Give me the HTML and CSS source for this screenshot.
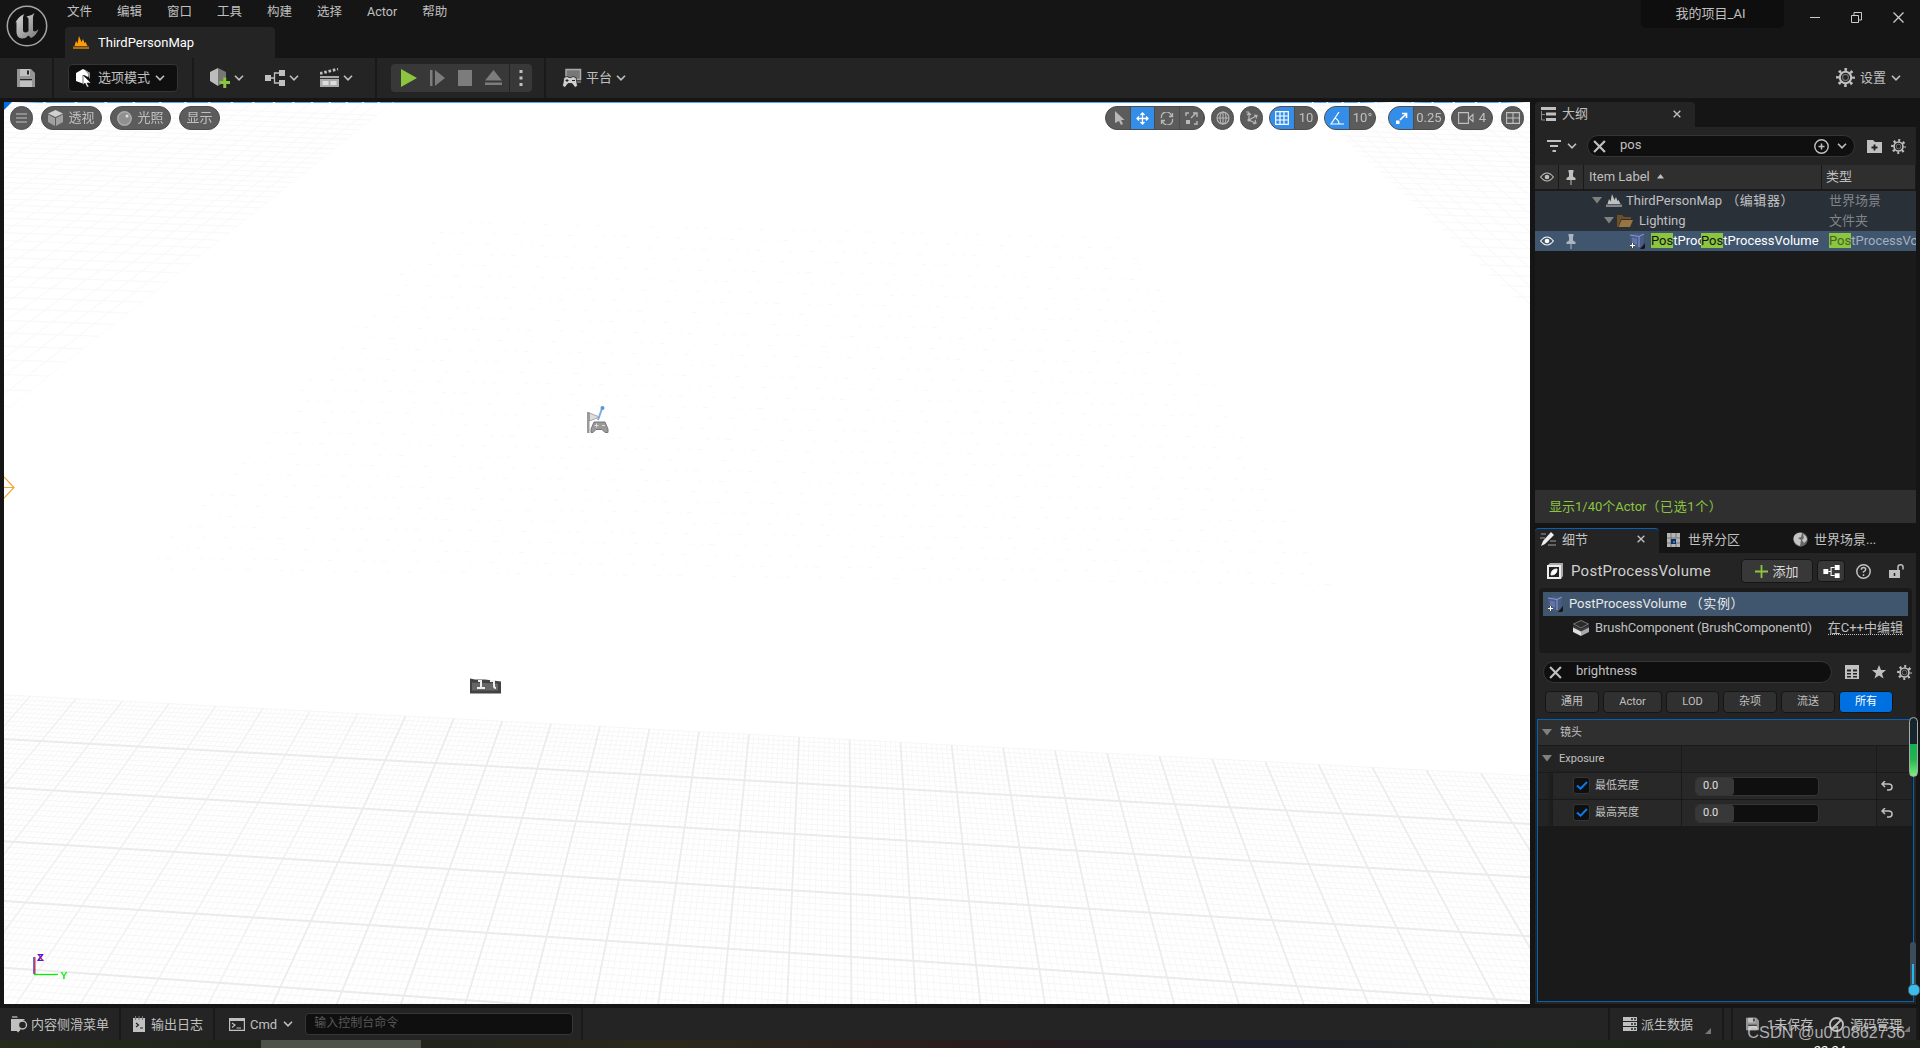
FILE: index.html
```html
<!DOCTYPE html>
<html lang="zh-CN">
  <head>
    <meta charset="utf-8">
    <meta name="viewport" content="width=device-width, initial-scale=1">
    <title>ThirdPersonMap</title>
    <link rel="stylesheet" href="styles.css">
  </head>
  <body>
    <svg class="defs" width="0" height="0">
      <symbol id="chev" viewBox="0 0 10 6"><path d="M1 .8l4 4 4-4" fill="none" stroke="currentColor" stroke-width="1.6"/></symbol>
      <symbol id="tri" viewBox="0 0 10 7"><path d="M0 0h10L5 6.5z" fill="currentColor"/></symbol>
      <symbol id="cross" viewBox="0 0 12 12"><path d="M1 1l10 10M11 1L1 11" fill="none" stroke="currentColor" stroke-width="2"/></symbol>
      <symbol id="gear" viewBox="0 0 18 18"><circle cx="9" cy="9" r="7.4" fill="none" stroke="currentColor" stroke-width="3" stroke-dasharray="2.4 3.41" stroke-dashoffset="1.2"/><circle cx="9" cy="9" r="5.4" fill="none" stroke="currentColor" stroke-width="2"/><circle cx="9" cy="9" r="2.8" fill="none" stroke="currentColor" stroke-width="1" opacity=".55"/></symbol>
      <symbol id="map" viewBox="0 0 16 13"><path d="M0 10.5h16V13H0z" fill="currentColor" opacity=".6"/><path d="M1.500 10L3 5l1.500 2.500L6 0l2.500 6L10 3l1.500 4 1-1L14.500 10z" fill="currentColor"/></symbol>
      <symbol id="save" viewBox="0 0 18 18"><path d="M0 0h14l4 4v14H0z" fill="currentColor" opacity=".72"/><path d="M3 0h10v7H3zM3 11h12v7H3z" fill="currentColor"/><path d="M10 1.500h2v4h-2z" fill="#242424"/><path d="M3 10h12v1.300H3z" fill="#242424"/></symbol>
      <symbol id="nodes" viewBox="0 0 20 16"><path d="M0 5h6v6H0zM14 0h6v6h-6zM14 10h6v6h-6z" fill="currentColor"/><path d="M6 8h3M14 3H9.500v10H14" fill="none" stroke="currentColor" stroke-width="1.300"/></symbol>
      <symbol id="eye" viewBox="0 0 14 10"><path d="M.6 5Q7-3 13.400 5 7 13 .6 5z" fill="none" stroke="currentColor" stroke-width="1.200"/><circle cx="7" cy="5" r="2.300" fill="currentColor"/></symbol>
      <symbol id="pin" viewBox="0 0 10 15"><path d="M2.500 0h5v2L7 3v3.500L9.500 8v2h-9V8L3 6.500V3L2.500 2z" fill="currentColor"/><path d="M5 10v5" stroke="currentColor"/></symbol>
      <symbol id="volume" viewBox="0 0 16 16"><path d="M11 16l5-6v5l-1 1z" fill="#161616"/><path d="M1 2l5-2 9 1-1 11-4 3-8-2z" fill="#4a5b88"/><path d="M1 2l9 1.500L15 1M10 3.500V14" fill="none" stroke="#8a9ccb"/><path d="M3 4.500l5 1v6l-5-1z" fill="#5f74a8"/><path d="M1 12.500h5M3.500 10v5" stroke="#111" stroke-width="3"/><path d="M1 12.500h5M3.500 10v5" stroke="#fff" stroke-width="1.300"/></symbol>
      <symbol id="grip" viewBox="0 0 6 6"><path d="M6 0v6H0z" fill="#777"/></symbol>
    </svg>

    <div class="app">
      <header class="titlebar">
        <svg class="logo" viewBox="0 0 42 42">
          <defs><linearGradient id="metal" x1="0" y1="0" x2="1" y2="1"><stop offset="0" stop-color="#ddd"/><stop offset="1" stop-color="#777"/></linearGradient></defs>
          <circle cx="21" cy="21" r="19.700" fill="#131313" stroke="#a5a5a5" stroke-width="1.500"/>
          <path d="M8.500 20q2.500-8 10-11-1.500 1.500-1.500 3.500v12.500q0 2.500 2.500 2.500 1.800 0 3-1.500V13.500l-2-2q5-.5 8-3.500-1.500 2.500-1.500 4.500v12q0 2 1.500 2 1.500 0 4-2.500-2 6.500-7.500 9l-2.500-2.500q-3 3.500-7 3-5-1-5-6.500V17q-1.200 0-2 3z" fill="url(#metal)"/>
        </svg>
        <div class="titlebar-main">
          <nav class="menu">
            <span>文件</span><span>编辑</span><span>窗口</span><span>工具</span><span>构建</span><span>选择</span><span>Actor</span><span>帮助</span>
          </nav>
          <div class="level-tab"><svg class="orange" width="16" height="13"><use href="#map"/></svg>ThirdPersonMap</div>
        </div>
        <div class="project">我的项目_AI</div>
        <div class="window-buttons">
          <svg width="10" height="12"><path d="M0 6.500h10" stroke="#ccc"/></svg>
          <svg width="11" height="11"><path d="M.5 3.500h7v7h-7zM3 3V.5h7.500V8H8" fill="none" stroke="#ccc"/></svg>
          <svg width="11" height="11"><path d="M.5.5l10 10M10.500.5l-10 10" stroke="#ccc" stroke-width="1.300"/></svg>
        </div>
      </header>

      <div class="toolbar">
        <div class="tool-save"><svg width="18" height="18"><use href="#save"/></svg></div>
        <div class="tool-mode">
          <div class="mode">
            <svg width="16" height="18"><path d="M0 4l7-4 7 4-2 1v3l-4-2v9L0 12z" fill="#fff"/><path d="M8 0l6 4v6l-2-3V5z" fill="#999"/><path d="M7 6l8 8h-4l2 4h-2l-2-4-2 2z" fill="#fff" stroke="#111" stroke-width=".6"/></svg>
            <span>选项模式</span><svg class="chev"><use href="#chev"/></svg>
          </div>
        </div>
        <div class="tool-create">
          <div class="drop"><svg width="20" height="20"><path d="M0 4l8-4v18l-8-5z" fill="#bdbdbd"/><path d="M8 0l8 4v9l-8 5z" fill="#777"/><path d="M9.500 14.500h10.500M14.750 9.500V20" stroke="#8cc63f" stroke-width="3"/></svg><svg class="chev"><use href="#chev"/></svg></div>
          <div class="drop"><svg width="20" height="16"><use href="#nodes"/></svg><svg class="chev"><use href="#chev"/></svg></div>
          <div class="drop"><svg width="19" height="19"><path d="M0 5.500L18 1" stroke="#c0c0c0" stroke-width="2.800" stroke-dasharray="2.600 1.800"/><path d="M0 8h19v11H0z" fill="#aaa"/><path d="M2.500 13h6v4h-6zM10.500 13h6v4h-6z" fill="#ddd"/><path d="M0 10.500h19" stroke="#333"/></svg><svg class="chev"><use href="#chev"/></svg></div>
        </div>
        <div class="tool-play">
          <div class="play">
            <svg width="16" height="18"><path d="M0 0l16 9L0 18z" fill="#8cc63f"/></svg>
            <svg width="15" height="16"><path d="M0 0h2.500v16H0zM5 0l10 8-10 8z" fill="#7c7c7c"/></svg>
            <svg width="14" height="16"><path d="M0 0h14v16H0z" fill="#7c7c7c"/></svg>
            <svg width="17" height="16"><path d="M8.500 0L17 10.500H0zM0 12.500h17V15H0z" fill="#7c7c7c"/></svg>
            <div class="dots"><svg width="4" height="18"><path d="M.5 1h3v3h-3zM.5 7.500h3v3h-3zM.5 14h3v3h-3z" fill="#c0c0c0"/></svg></div>
          </div>
        </div>
        <div class="platform"><svg width="20" height="20"><path d="M4 1.500h14.500v10H4z" fill="#777" stroke="#aaa" stroke-width="1.500"/><path d="M14 14h5" stroke="#aaa"/><path d="M2 9.500l3-1 2 1h2l2-1 3 1 1.500 8.500-2.500 1.500-3-4H6l-3 4L.500 18z" fill="#d0d0d0" stroke="#222" stroke-width=".8"/><path d="M3.500 12.500h3M5 11v3M10 12.500h3" stroke="#222"/></svg><span>平台</span><svg class="chev"><use href="#chev"/></svg></div>
        <div class="settings"><svg width="19" height="19"><use href="#gear"/></svg><span>设置</span><svg class="chev"><use href="#chev"/></svg></div>
      </div>

      <main class="workspace">
        <section class="viewport">
          <canvas class="grid" width="1526" height="902"></canvas>
          <svg class="overlay" width="1526" height="902">
            <path d="M0 0h8L0 8z" fill="#0070e0"/>
            <path d="M0 375l10 10.500L0 396M0 385.500h10" fill="none" stroke="#f0a830" stroke-width="1.200"/>
            <g transform="translate(583 302)">
              <path d="M0 8h2.500v21H0z" fill="#999"/><path d="M2.500 9l10 4-10 4z" fill="#ddd" stroke="#888" stroke-width=".7"/>
              <path d="M11 16l4.500-13" stroke="#79aee3" stroke-width="2"/><circle cx="15.500" cy="4" r="2" fill="#5a96d8"/>
              <path d="M7 18h11l3 7v3.500h-3l-3-3H9l-3 3H4V25z" fill="#999" stroke="#777"/><path d="M7.500 21.500h4M9.500 19.500v4M15 21.500h3" stroke="#ddd"/>
            </g>
            <g transform="translate(466 576.500)">
              <path d="M0 0l5 1h10l16 2v12H0z" fill="#424242"/><path d="M2 4l26 1v7H2z" fill="#666"/>
              <path d="M8 2.500h3v7M7 9.500h8M20 2.500h4v5q0 2 2 2" fill="none" stroke="#eee" stroke-width="2"/>
            </g>
            <path d="M30 855v17" stroke="#2020d0" stroke-width="1.300"/><path d="M31 855v17" stroke="#e02020"/><path d="M30 872.500h24" stroke="#00f000" stroke-width="1.300"/>
            <text class="axis-x" x="33" y="859">X</text><text class="axis-z" x="33" y="859">Z</text><text class="axis-y" x="56.500" y="877">Y</text>
          </svg>
          <div class="view-bar">
            <div class="pill round"><svg width="11" height="10"><path d="M0 1h11M0 5h11M0 9h11" stroke="#c0c0c0"/></svg></div>
            <div class="pill wide"><svg width="15" height="16"><path d="M7.500 0L15 3.500 7.500 7 0 3.500z" fill="#d0d0d0"/><path d="M0 4.500L7 8v8l-7-4zM15 4.500L8 8v8l7-4z" fill="#a0a0a0"/></svg><b>透视</b></div>
            <div class="pill wide"><svg width="15" height="15"><circle cx="7.500" cy="7.500" r="6.700" fill="#909090" stroke="#aaa" stroke-width="1.500"/><circle cx="10" cy="5" r="1.500" fill="#ddd"/></svg><b>光照</b></div>
            <div class="pill show"><b>显示</b></div>
            <div class="pill split transform">
              <span><svg width="10" height="14"><path d="M0 0l9.500 9H6l2 4-2 1-2-4-4 2z" fill="#b8b8b8"/></svg></span>
              <span class="on"><svg width="13" height="13"><path d="M6.500 1v11M1 6.500h11M4.500 3l2-2 2 2M4.500 10l2 2 2-2M3 4.500l-2 2 2 2M10 4.500l2 2-2 2" fill="none" stroke="#fff" stroke-width="1.300"/></svg></span>
              <span><svg width="14" height="13"><path d="M1.500 6A5 5 0 0 1 11.500 4M12.500 7A5 5 0 0 1 2.500 9M12.500 1v3.500H9M1.500 12V8.500H5" fill="none" stroke="#b8b8b8" stroke-width="1.300"/></svg></span>
              <span><svg width="13" height="13"><path d="M1 4V1h3M9 12h3V9M6 6l5-5M8 1h4v4" fill="none" stroke="#b8b8b8" stroke-width="1.400"/><path d="M1 8h4v4H1z" fill="#b8b8b8"/></svg></span>
            </div>
            <div class="pill round"><svg width="14" height="14"><g fill="none" stroke="#b8b8b8" stroke-width="1.100"><circle cx="7" cy="7" r="6"/><ellipse cx="7" cy="7" rx="3" ry="6"/><path d="M1 7h12M7 1v12"/></g></svg></div>
            <div class="pill round"><svg width="14" height="14"><path d="M4 9V2M2 4l2-2 2 2M4 9l7-4M9 4l3 .5-1 3M4 9l6 3M8 13l3-1-1-3M1 1h3" fill="none" stroke="#b8b8b8" stroke-width="1.200"/><circle cx="4" cy="9" r="1.600" fill="#b8b8b8"/></svg></div>
            <div class="pill split snap-grid"><span class="on"><svg width="14" height="14"><path d="M.7.700h12.600v12.600H.7zM5 1v12M9 1v12M1 5h12M1 9h12" fill="none" stroke="#fff" stroke-width="1.200"/></svg></span><b>10</b></div>
            <div class="pill split snap-angle"><span class="on"><svg width="14" height="13"><path d="M9 0L1 12h13M5 6q4 2 4 6" fill="none" stroke="#fff" stroke-width="1.200"/></svg></span><b>10°</b></div>
            <div class="pill split snap-scale"><span class="on"><svg width="13" height="13"><path d="M5 8l6-6M7 1.500h4.500V6" fill="none" stroke="#fff" stroke-width="1.700"/><path d="M1 8.500h3.500V12H1z" fill="#fff"/></svg></span><b>0.25</b></div>
            <div class="pill camera"><svg width="16" height="12"><path d="M.6.600h9.800v10.800H.6zM11 6l4-3.500v7z" fill="none" stroke="#c0c0c0" stroke-width="1.100"/></svg><b>4</b></div>
            <div class="pill round last"><svg width="14" height="12"><path d="M.6.600h12.800v10.800H.6zM7 0v12M0 6h14" fill="none" stroke="#c0c0c0" stroke-width="1.100"/></svg></div>
          </div>
        </section>

        <aside class="side">
          <section class="outliner">
            <div class="tabs"><div class="tab tab-outliner"><svg width="15" height="14"><path d="M0 0h15v3H0zM5 5.500h10v3H5zM5 11h10v3H5z" fill="#c0c0c0"/><path d="M.5 4v9H4M.5 7.500H4" fill="none" stroke="#888"/></svg>大纲<svg class="close" width="8" height="8"><use href="#cross"/></svg></div></div>
            <div class="search-row">
              <svg width="15" height="12"><path d="M0 1h14M3 6h8M5.500 11h3.500" stroke="#c0c0c0" stroke-width="2.200"/></svg>
              <svg class="chev"><use href="#chev"/></svg>
              <div class="search outliner-search"><svg width="13" height="13"><use href="#cross"/></svg><span>pos</span>
                <svg class="plus" width="15" height="15"><path d="M4.500 7.500h6M7.500 4.500v6" stroke="#c0c0c0" stroke-width="1.500"/><circle cx="7.500" cy="7.500" r="6.700" fill="none" stroke="#c0c0c0" stroke-width="1.400"/></svg><svg class="chev"><use href="#chev"/></svg></div>
              <svg class="add-folder" width="15" height="13"><path d="M0 0h6l2 2h7v11H0z" fill="#c0c0c0"/><path d="M4.500 7.500h6M7.500 4.500v6" stroke="#222" stroke-width="1.800"/></svg>
              <svg width="15" height="15"><use href="#gear"/></svg>
            </div>
            <div class="cols head"><i><svg width="14" height="10"><use href="#eye"/></svg></i><i><svg width="10" height="15"><use href="#pin"/></svg></i><span>Item Label<svg class="sort" width="7" height="5"><path d="M0 4.500L3.500 0 7 4.500z" fill="#c0c0c0"/></svg></span><em>类型</em></div>
            <div class="tree">
              <div class="cols row parent"><i></i><i></i><span class="lv0"><svg class="arrow"><use href="#tri"/></svg><svg width="16" height="13"><use href="#map"/></svg>ThirdPersonMap <span class="note">（编辑器）</span></span><em>世界场景</em></div>
              <div class="cols row parent"><i></i><i></i><span class="lv1"><svg class="arrow"><use href="#tri"/></svg><svg width="16" height="12"><path d="M0 0h5l2 2h7v2H4l-3 8H0z" fill="#6c5027"/><path d="M4.500 5H16l-3 7H1.500z" fill="#9a7440"/></svg>Lighting</span><em>文件夹</em></div>
              <div class="cols row selected"><i><svg width="14" height="10"><use href="#eye"/></svg></i><i class="pinned"><svg width="10" height="15"><use href="#pin"/></svg></i><span class="lv2"><svg width="16" height="16"><use href="#volume"/></svg><span class="label cut"><mark>Pos</mark>tProcess</span><span class="label"><mark>Pos</mark>tProcessVolume</span></span><em><mark>Pos</mark>tProcessVolume</em></div>
            </div>
            <div class="status">显示1/40个Actor<span class="note">（已选1个）</span></div>
          </section>

          <section class="details">
            <div class="tabs">
              <div class="tab tab-details"><svg width="16" height="15"><path d="M1 2h5M0 6h5M10 9h6M8 13h8" stroke="#777" stroke-width="1.600"/><path d="M1 14l2-5 8-9 3 3-9 9z" fill="#eee"/></svg>细节<svg class="close" width="8" height="8"><use href="#cross"/></svg></div>
              <div class="tab-off tab-world"><svg width="13" height="14"><path d="M0 0h13v14H0z" fill="#b5b5b5"/><path d="M4 0v14M9 0v5M0 5h13M0 10h13M9 10v4" stroke="#777"/><path d="M4 6h5v5H4z" fill="#16305c"/><path d="M6 8h2v2H6z" fill="#1e80e0"/></svg>世界分区</div>
              <div class="tab-off"><svg width="15" height="15"><circle cx="7.500" cy="7.500" r="7.200" fill="#666"/><path d="M1 4q3-4 8-3l-1 4-3 1 3 2-1 6Q1 12 .5 7zM10 2q4 2 4 6l-3 3-2-3 2-2z" fill="#c4c4c4"/></svg>世界场景...</div>
            </div>
            <div class="object">
              <svg width="16" height="16"><path d="M3 0h13v13l-2 3V2H1z" fill="#aaa"/><path d="M1 3h12v12H1z" fill="#222" stroke="#eee" stroke-width="2"/><path d="M4 12q0-6 6-6 0 6-6 6z" fill="#fff" stroke="#fff"/></svg>
              <h1>PostProcessVolume</h1>
              <div class="button add"><svg width="13" height="13"><path d="M0 6.500h13M6.500 0v13" stroke="#8cc63f" stroke-width="1.800"/></svg>添加</div>
              <div class="button bp"><svg width="17" height="13"><use href="#nodes"/></svg></div>
              <svg class="help" width="15" height="15"><circle cx="7.500" cy="7.500" r="6.700" fill="none" stroke="#c0c0c0" stroke-width="1.500"/><path d="M5.300 5.800q0-2.300 2.200-2.300t2.200 2q0 1.200-2.200 2.300v1M7.500 10.300v1.700" fill="none" stroke="#c0c0c0" stroke-width="1.500"/></svg>
              <svg width="15" height="15"><path d="M0 6h11v8H0z" fill="#c0c0c0"/><path d="M9 6V3q0-2.200 2.500-2.200T14 3v2.500" fill="none" stroke="#c0c0c0" stroke-width="1.500"/><path d="M5.500 9v3" stroke="#222" stroke-width="1.500"/></svg>
            </div>
            <div class="components">
              <div class="component on"><svg width="16" height="16"><use href="#volume"/></svg><span>PostProcessVolume <span class="note">（实例）</span></span></div>
              <div class="component child"><svg width="16" height="16"><path d="M.5 4L8 .5 15.500 4 8 8z" fill="#2a2a2a" stroke="#777"/><path d="M0 5l8 4 8-4v3l-8 4-8-4z" fill="#3a3a3a"/><path d="M0 7.500l8 4V16l-8-4z" fill="#ddd"/><path d="M16 7.500l-8 4V16l8-4z" fill="#aaa"/></svg><span class="brush">BrushComponent (BrushComponent0)</span><u>在C++中编辑</u></div>
            </div>
            <div class="search-row detail-search-row">
              <div class="search"><svg width="13" height="13"><use href="#cross"/></svg><span>brightness</span></div>
              <svg width="14" height="14"><path d="M0 0h14v14H0z" fill="#c0c0c0"/><path d="M2 4.500h4v2H2zM8 4.500h4v2H8zM2 8h4v1.500H2zM8 8h4v1.500H8zM2 11h4v1.500H2zM8 11h4v1.500H8z" fill="#222"/></svg>
              <svg width="14" height="14"><path d="M7 0l2 5h5l-4 3.500 1.500 5L7 10.500l-4.500 3 1.500-5L0 5h5z" fill="#c0c0c0"/></svg>
              <svg width="15" height="15"><use href="#gear"/></svg>
            </div>
            <div class="filters"><span>通用</span><span class="f-actor">Actor</span><span class="f-lod">LOD</span><span>杂项</span><span>流送</span><span class="on">所有</span></div>
            <div class="props">
              <div class="category"><svg class="arrow"><use href="#tri"/></svg>镜头</div>
              <div class="prop"><span class="name group"><svg class="arrow"><use href="#tri"/></svg>Exposure</span><span></span><span></span></div>
              <div class="prop"><span class="name"><i class="check"><svg width="12" height="9"><path d="M1 4.500l3.500 3.200L11 1" fill="none" stroke="#0a78e8" stroke-width="2"/></svg></i>最低亮度</span><span class="value"><span class="num"><b>0.0</b></span></span><span class="reset"><svg width="12" height="10"><path d="M4 0L1 3l3 3M1 3h6.500q3.500 0 3.500 3t-3 3H6" fill="none" stroke="#c0c0c0" stroke-width="1.500"/></svg></span></div>
              <div class="prop"><span class="name"><i class="check"><svg width="12" height="9"><path d="M1 4.500l3.500 3.200L11 1" fill="none" stroke="#0a78e8" stroke-width="2"/></svg></i>最高亮度</span><span class="value"><span class="num"><b>0.0</b></span></span><span class="reset"><svg width="12" height="10"><path d="M4 0L1 3l3 3M1 3h6.500q3.500 0 3.500 3t-3 3H6" fill="none" stroke="#c0c0c0" stroke-width="1.500"/></svg></span></div>
              <div class="meter"></div>
              <div class="thermo"></div>
            </div>
          </section>
        </aside>
      </main>

      <footer class="statusbar">
        <div class="st-drawer"><svg width="17" height="17"><path d="M1 0h5l1 2H1z" fill="#888"/><path d="M0 3h14l-5 4v8H0z" fill="#c0c0c0"/><circle cx="11.500" cy="9" r="4" fill="#242424" stroke="#c0c0c0" stroke-width="1.400"/><path d="M9.500 12l-3 4" stroke="#c0c0c0" stroke-width="1.600"/></svg>内容侧滑菜单</div>
        <div class="st-log"><svg width="12" height="16"><path d="M0 2h12v14H0z" fill="#c0c0c0"/><path d="M2.500 0v4M6 0v4M9.500 0v4" stroke="#777"/><path d="M3 7l2.500 2L3 11M7 12h3" fill="none" stroke="#222" stroke-width="1.200"/></svg>输出日志</div>
        <div class="st-cmd"><svg width="16" height="13"><path d="M.6.600h14.800v11.800H.6z" fill="none" stroke="#c0c0c0" stroke-width="1.200"/><path d="M0 0h16v3H0z" fill="#c0c0c0"/><path d="M3 5l3 2-3 2.500M7.500 10H12" fill="none" stroke="#c0c0c0" stroke-width="1.200"/></svg>Cmd<svg class="chev"><use href="#chev"/></svg><div class="console">输入控制台命令</div></div>
        <div class="st-fill"></div>
        <div class="st-derived"><svg width="14" height="14"><path d="M0 0h14v4H0zM0 5h14v4H0zM0 10h14v4H0z" fill="#c0c0c0"/><path d="M8 2h2M11 2h2M8 7h2M11 7h2M8 12h2M11 12h2" stroke="#222" stroke-width="1.500"/></svg>派生数据<svg class="grip"><use href="#grip"/></svg></div>
        <div class="st-gap"></div>
        <div class="st-save"><svg width="13" height="14" viewBox="0 0 18 18"><use href="#save"/></svg><span>1未保存</span><svg width="15" height="15"><circle cx="7.500" cy="7.500" r="6.500" fill="none" stroke="#c0c0c0" stroke-width="1.800"/><path d="M3 12l9-9" stroke="#c0c0c0" stroke-width="1.800"/></svg>源码管理<svg class="grip"><use href="#grip"/></svg></div>
      </footer>
      <div class="taskbar"><div class="task-active"></div><div class="clock">22:24</div></div>
    </div>
    <div class="credit">CSDN @u010862736</div>

    <script>
      const canvas = document.querySelector(".grid");
      const ctx = canvas.getContext("2d");
      // corners of the cell range (-13..11, 0..4) of the floor grid
      const quad = [[168.9, 703.6], [1372.4, 767.4], [1495.4, 999.3], [25.5, 902.3]];
      const [p0, p1, p2, p3] = quad;
      const dx1 = p1[0] - p2[0], dx2 = p3[0] - p2[0], dx3 = p0[0] - p1[0] + p2[0] - p3[0];
      const dy1 = p1[1] - p2[1], dy2 = p3[1] - p2[1], dy3 = p0[1] - p1[1] + p2[1] - p3[1];
      const det = dx1 * dy2 - dx2 * dy1;
      const g = (dx3 * dy2 - dx2 * dy3) / det;
      const h = (dx1 * dy3 - dx3 * dy1) / det;

      function project(u, v) {
        const s = (u + 13) / 24, t = v / 4;
        const w = g * s + h * t + 1;
        return [
          ((p1[0] - p0[0] + g * p1[0]) * s + (p3[0] - p0[0] + h * p3[0]) * t + p0[0]) / w - 4,
          ((p1[1] - p0[1] + g * p1[1]) * s + (p3[1] - p0[1] + h * p3[1]) * t + p0[1]) / w - 102
        ];
      }

      function line(a, b, color, width) {
        ctx.strokeStyle = color;
        ctx.lineWidth = width;
        ctx.beginPath();
        ctx.moveTo(a[0], a[1]);
        ctx.lineTo(b[0], b[1]);
        ctx.stroke();
      }

      function gridLine(u1, v1, u2, v2, color, width) {
        line(project(u1, v1), project(u2, v2), color, width);
      }

      // thin lines first, every tenth one is a major line
      for (let i = -300; i <= 250; i++) {
        if (i % 10) gridLine(i / 10, 0, i / 10, 7, "#f7f7f7", 1);
      }
      for (let j = 0; j <= 70; j++) {
        if (j % 10 || !j) gridLine(-30, j / 10, 25, j / 10, "#f6f6f6", 1);
      }
      for (let i = -30; i <= 25; i++) gridLine(i, 0, i, 7, i < -8 ? "#f2f2f2" : "#ececec", 1.8);
      for (let j = 1; j <= 7; j++) gridLine(-30, j, 25, j, "#ebebeb", 2);

      // distant floor on both sides
      function corner(points, x, vx, slope) {
        ctx.save();
        ctx.beginPath();
        points.forEach(p => ctx.lineTo(p[0], p[1]));
        ctx.clip();
        for (let y = 310; y > -300; y -= 18) {
          line([x, y], [vx, -564], "#f9f9f9", 1.2);
        }
        for (let y = 304, step = 17; y > 0; y -= step) {
          line([x, y], [x + (x ? -400 : 400), y + slope], "#f9f9f9", 1.2);
          step = Math.max(5, step * 0.95);
        }
        ctx.restore();
      }
      corner([[0, 0], [390, 0], [0, 310]], 0, 1100, 14);
      corner([[1300, 0], [1526, 0], [1526, 210]], 1526, 700, -14);

      // broken lines flickering through the bright area
      for (let y = 120; y < 470; y += 10.5) {
        const left = 403 - (y - 163) * 0.87;
        const right = 1150 + (y - 163) * 0.6;
        ctx.setLineDash([3, 9, 2, 6, 5, 17, 1, 11]);
        ctx.lineDashOffset = y * 7;
        line([left, y], [right, y + 16], "#f8f8f8", 1);
      }
    </script>
  </body>
</html>
```
FILE: styles.css
```css
* {
  box-sizing: border-box;
}

body {
  margin: 0;
  background: #151515;
  color: #c0c0c0;
  font: 13px/1 Roboto, "Noto Sans CJK SC", sans-serif;
  overflow: hidden;
}

svg {
  flex: none;
  display: block;
}

.defs {
  position: absolute;
}

b, i, em {
  font-weight: normal;
  font-style: normal;
}

.app {
  width: 1920px;
  height: 1048px;
  display: flex;
  flex-direction: column;
}

.chev {
  width: 10px;
  height: 6px;
}

.arrow {
  width: 10px;
  height: 7px;
  color: #808080;
}

.note {
  letter-spacing: .6px;
}

/* title bar */

.titlebar {
  height: 58px;
  display: flex;
}

.logo {
  width: 42px;
  height: 42px;
  margin: 5px 17px 0 6px;
}

.titlebar-main {
  width: 1576px;
  display: flex;
  flex-direction: column;
  justify-content: space-between;
}

.menu {
  display: flex;
  gap: 25px;
  padding: 5px 0 0 2px;
  font-size: 12.5px;
  line-height: 14px;
}

.level-tab {
  width: 210px;
  height: 31px;
  display: flex;
  align-items: center;
  gap: 9px;
  padding-left: 8px;
  background: #242424;
  border-radius: 4px 4px 0 0;
  color: #fff;
}

.orange {
  color: #ff9c0a;
}

.project {
  width: 143px;
  height: 28px;
  padding-right: 4px;
  background: #0e0e0e;
  border-radius: 0 0 5px 5px;
  text-align: center;
  line-height: 27px;
}

.window-buttons {
  display: flex;
  align-items: center;
  gap: 31px;
  height: 34px;
  padding-left: 26px;
}

/* main toolbar */

.toolbar {
  height: 40px;
  background: #242424;
  display: flex;
}

.toolbar > div {
  display: flex;
  align-items: center;
  padding-bottom: 1px;
}

.toolbar span {
  margin-top: -1px;
}

.tool-save, .tool-mode, .tool-create, .tool-play {
  border-right: 2px solid #191919;
}

.tool-save {
  width: 54px;
  padding-left: 17px;
}

.tool-mode {
  width: 140px;
  padding-left: 14px;
}

.mode {
  width: 110px;
  height: 28px;
  display: flex;
  align-items: center;
  padding-left: 7px;
  gap: 5px;
  background: #0f0f0f;
  border: 1px solid #353535;
  border-radius: 4px;
}

.mode svg:first-child {
  margin-right: 1px;
}

.tool-create {
  width: 183px;
  padding-left: 16px;
  gap: 21px;
}

.drop {
  display: flex;
  align-items: center;
  gap: 4px;
}

.tool-play {
  width: 169px;
  padding-left: 14px;
}

.play {
  width: 141px;
  height: 28px;
  display: flex;
  align-items: center;
  gap: 13px;
  padding-left: 10px;
  background: #383838;
  border-radius: 4px;
}

.dots {
  height: 28px;
  display: flex;
  align-items: center;
  margin-left: -6px;
  padding-left: 9px;
  border-left: 1px solid #242424;
}

.platform {
  padding-left: 16px;
  gap: 4px;
}

.settings {
  margin-left: auto;
  padding-right: 19px;
  gap: 5px;
}

/* workspace */

.workspace {
  height: 906px;
  display: flex;
  justify-content: space-between;
  padding: 4px 4px 0 4px;
}

.viewport {
  position: relative;
  width: 1526px;
  height: 902px;
  background: #fff;
  border-top: 1px solid #5ba6ee;
}

.grid, .overlay {
  position: absolute;
  left: 0;
  top: -1px;
}

.axis-x, .axis-y, .axis-z {
  font: bold 11.5px "Liberation Mono", monospace;
}

.axis-x { fill: #f02040; }
.axis-z { fill: #4020f0; }
.axis-y { fill: #20f020; }

.view-bar {
  position: relative;
  display: flex;
  padding: 3px 6px;
  gap: 6px;
}

.pill {
  height: 24px;
  display: flex;
  align-items: center;
  justify-content: center;
  background: #5c5c5c;
  border: 1px solid #4c4c4c;
  border-radius: 12px;
  overflow: hidden;
}

.pill b {
  margin-top: -1px;
}

.round {
  width: 23px;
}

.wide {
  width: 61px;
  gap: 5px;
  margin-left: 2px;
}

.show {
  width: 41px;
  margin-left: 2px;
}

.split span {
  width: 25px;
  height: 24px;
  display: flex;
  align-items: center;
  justify-content: center;
  border-right: 1px solid #4c4c4c;
}

.split .on {
  background: #348ee8;
}

.split b {
  flex: 1;
  text-align: center;
}

.transform {
  width: 100px;
  margin-left: auto;
}

.transform span:first-child {
  padding-left: 4px;
}

.transform span {
  padding-left: 1px;
}

.snap-grid { width: 49px; }
.snap-angle { width: 52px; }

.snap-scale {
  width: 57px;
  margin-left: 6px;
}

.camera {
  width: 42px;
  gap: 5px;
}

.last {
  margin-left: 2px;
}

/* right column */

.side {
  width: 381px;
  height: 902px;
  display: flex;
  flex-direction: column;
  gap: 5px;
}

.outliner {
  height: 421px;
  display: flex;
  flex-direction: column;
}

.tabs {
  height: 25px;
  display: flex;
}

.tab {
  display: flex;
  align-items: center;
  gap: 6px;
  padding: 0 0 2px 6px;
  background: #242424;
  border-radius: 4px 4px 0 0;
}

.tab-outliner { width: 160px; }

.close {
  margin: 0 14px 0 auto;
}

.search-row {
  height: 38px;
  display: flex;
  align-items: center;
  padding: 0 10px 0 12px;
  background: #242424;
}

.search-row > .chev {
  margin: 0 10px 0 5px;
}

.search {
  height: 22px;
  display: flex;
  align-items: center;
  background: #0f0f0f;
  border: 1px solid #353535;
  border-radius: 11px;
}

.search span {
  margin: -3px 0 0 14px;
}

.outliner-search {
  width: 268px;
  padding: 0 7px 0 5px;
}

.plus {
  margin: 0 8px 0 auto;
}

.add-folder {
  margin: 0 9px 0 12px;
}

.cols {
  display: grid;
  grid-template-columns: 24px 25px 238px 94px;
}

.cols > * {
  display: flex;
  align-items: center;
  overflow: hidden;
  white-space: nowrap;
}

.cols i {
  justify-content: center;
}

.row > span, .row em {
  padding-bottom: 1px;
}

.cols em {
  padding-left: 7px;
}

.head {
  height: 24px;
  background: #2f2f2f;
}

.head > * {
  border-right: 1px solid #191919;
}

.head > span, .head em {
  padding: 0 0 2px 5px;
}

.head em {
  padding-left: 4px;
}

.sort {
  margin: 1px 0 0 7px;
}

.tree {
  flex: 1;
  padding-top: 2px;
  background: #1a1a1a;
}

.row {
  height: 20px;
}

.parent {
  background: #2a3038;
}

.row em {
  color: #808488;
}

.selected {
  background: #40566f;
  color: #fff;
}

.selected em {
  color: #a5b0bc;
}

.pinned {
  padding-right: 2px;
  color: #a9b4bf;
}

.cols .lv0 { padding-left: 8px; gap: 4px; }
.cols .lv1 { padding-left: 20px; gap: 3px; }
.lv1 svg:nth-child(2) { margin-right: 3px; }
.cols .lv2 { padding-left: 45px; gap: 0; }

.label.cut {
  width: 50px;
  margin-left: 6px;
  overflow: hidden;
}

mark {
  display: inline-block;
  line-height: 15px;
  background: #8cc63f;
  color: #111;
}

.selected em mark {
  color: #44652a;
}

.status {
  height: 33px;
  padding-left: 14px;
  background: #2f2f2f;
  color: #8cc63f;
  line-height: 33px;
}

/* details panel */

.details {
  height: 476px;
  background: #242424;
}

.details .tabs {
  background: #151515;
}

.tab-details {
  width: 124px;
  padding: 0 0 4px 5px;
  border-top: 1px solid #0a5fb8;
}

.tab-off {
  display: flex;
  align-items: center;
  gap: 8px;
  padding: 0 0 2px 8px;
}

.tab-off:last-child {
  gap: 6px;
}

.tab-world {
  width: 126px;
}

.object {
  height: 35px;
  display: flex;
  align-items: center;
  padding: 1px 0 0 12px;
}

.object h1 {
  width: 170px;
  margin: 0 0 0 8px;
  font-size: 15px;
  font-weight: normal;
  letter-spacing: .25px;
  color: #d0d0d0;
}

.button {
  display: flex;
  align-items: center;
  justify-content: center;
  gap: 4px;
  background: #383838;
  border: 1px solid #151515;
  border-radius: 4px;
  color: #fff;
}

.add {
  width: 72px;
  height: 24px;
  color: #d8d8d8;
}

.bp {
  width: 28px;
  height: 22px;
  margin-left: 4px;
}

.help {
  margin: 0 18px 0 11px;
}

.components {
  height: 65px;
  margin: 0 4px;
  padding: 4px;
  background: #1a1a1a;
  border-radius: 4px;
}

.component {
  height: 24px;
  display: flex;
  align-items: center;
  gap: 6px;
  padding: 0 0 1px 4px;
}

.component.on {
  background: #40566f;
  color: #e8e8e8;
}

.component.child {
  padding: 0 5px 1px 30px;
}

.brush {
  letter-spacing: -.15px;
}

.component u {
  margin-left: auto;
  text-decoration: none;
  border-bottom: 1px dotted #c0c0c0;
}

.detail-search-row {
  padding: 0 3px 0 8px;
}

.detail-search-row .search {
  width: 289px;
  padding-left: 5px;
}

.detail-search-row > svg {
  margin-left: 13px;
}

.detail-search-row > svg:last-child {
  margin-left: 11px;
}

.filters {
  display: flex;
  gap: 4px;
  padding-left: 10px;
  font-size: 11px;
}

.filters span {
  width: 54px;
  height: 22px;
  background: #303030;
  border: 1px solid #151515;
  border-radius: 4px;
  text-align: center;
  line-height: 20px;
}

.filters .f-actor {
  width: 59px;
}

.filters .f-lod {
  width: 53px;
}

.filters .on {
  background: #0070e0;
  color: #fff;
}

.props {
  position: relative;
  width: 377px;
  height: 283px;
  margin: 6px 0 0 2px;
  background: #1a1a1a;
  border: 1px solid #0560b8;
  font-size: 11px;
}

.category {
  height: 26px;
  display: flex;
  align-items: center;
  gap: 8px;
  padding: 0 0 1px 4px;
  background: #2f2f2f;
  border-bottom: 1px solid #1a1a1a;
}

.prop {
  height: 27px;
  display: grid;
  grid-template-columns: 144px 195px 36px;
  background: #242424;
  border-bottom: 1px solid #1a1a1a;
}

.prop > * {
  display: flex;
  align-items: center;
  border-right: 1px solid #1a1a1a;
}

.name {
  gap: 5px;
  margin-left: 15px;
  padding: 0 0 1px 20px;
  background: #282828;
  box-shadow: -3px 0 3px #1c1c1c;
}

.name.group {
  gap: 7px;
  margin-left: 0;
  padding-left: 4px;
  background: none;
  box-shadow: none;
}

.check {
  width: 17px;
  height: 17px;
  display: flex;
  align-items: center;
  justify-content: center;
  background: #0f0f0f;
  border: 1px solid #353535;
  border-radius: 3px;
}

.value {
  padding-left: 13px;
  background: #282828;
}

.num {
  width: 124px;
  height: 19px;
  background: #0f0f0f;
  border: 1px solid #353535;
  border-radius: 4px;
}

.num b {
  display: block;
  width: 38px;
  height: 17px;
  padding-left: 7px;
  background: #383838;
  border-radius: 3px;
  color: #e0e0e0;
  line-height: 16px;
}

.reset {
  padding-left: 4px;
}

/* level indicators that sit on the right edge of the list */

.meter {
  position: absolute;
  right: -5px;
  top: -3px;
  width: 9px;
  height: 60px;
  border: 1px solid #aaa;
  border-radius: 5px;
  background: linear-gradient(#15252e 45%, #14b053 45%, #22b450 70%, #7cf07a);
}

.thermo {
  position: absolute;
  right: -3px;
  bottom: 8px;
  width: 6px;
  height: 51px;
  border-radius: 3px;
  background: linear-gradient(90deg, transparent 2px, #29b4ea 2px, #29b4ea 4px, transparent 4px) 0 22px no-repeat, #3c4c58;
}

.thermo::after {
  content: "";
  position: absolute;
  left: -2px;
  bottom: -3px;
  width: 10px;
  height: 10px;
  border: 1px solid #3c5c6c;
  border-radius: 5px;
  background: #3cbcec;
}

/* bottom bar */

.statusbar {
  height: 36px;
  padding-top: 4px;
  display: flex;
  white-space: nowrap;
}

.statusbar > div {
  display: flex;
  align-items: center;
  background: #242424;
  border-right: 2px solid #191919;
}

.st-drawer {
  width: 121px;
  padding-left: 11px;
  gap: 3px;
}

.st-log {
  width: 94px;
  padding-left: 12px;
  gap: 6px;
}

.st-cmd {
  width: 368px;
  padding-left: 14px;
  gap: 5px;
}

.st-cmd .chev {
  margin-left: 1px;
}

.console {
  width: 268px;
  height: 22px;
  margin-left: 7px;
  padding-left: 8px;
  background: #0f0f0f;
  border: 1px solid #353535;
  border-radius: 4px;
  color: #585858;
  font-size: 12px;
  line-height: 18px;
}

.st-fill { width: 1027px; }

.st-derived {
  width: 114px;
  padding-left: 13px;
  gap: 4px;
}

.st-gap { width: 9px; }

.st-save {
  width: 185px;
  padding-left: 13px;
  gap: 6px;
}

.st-save span {
  margin: 0 10px 0 2px;
}

.grip {
  width: 6px;
  height: 6px;
  align-self: flex-end;
  margin: 0 11px 6px auto;
}

.st-save .grip {
  margin: 0 0 8px -4px;
}

.taskbar {
  height: 8px;
  display: flex;
  justify-content: space-between;
  overflow: hidden;
  background: linear-gradient(90deg, #262d1c, #1d2319 15%, #2c281c 35%, #2a1c1c 50%, #1c1c2a 65%, #20271c 80%, #1c2119);
}

.task-active {
  width: 160px;
  margin-left: 261px;
  background: #4d5148;
}

.clock {
  margin: 4px 74px 0 0;
  color: #fff;
}

.credit {
  position: absolute;
  right: 15px;
  bottom: 7px;
  color: rgba(220, 220, 220, .75);
  font: 16.3px/18px "Liberation Sans", sans-serif;
}
```
